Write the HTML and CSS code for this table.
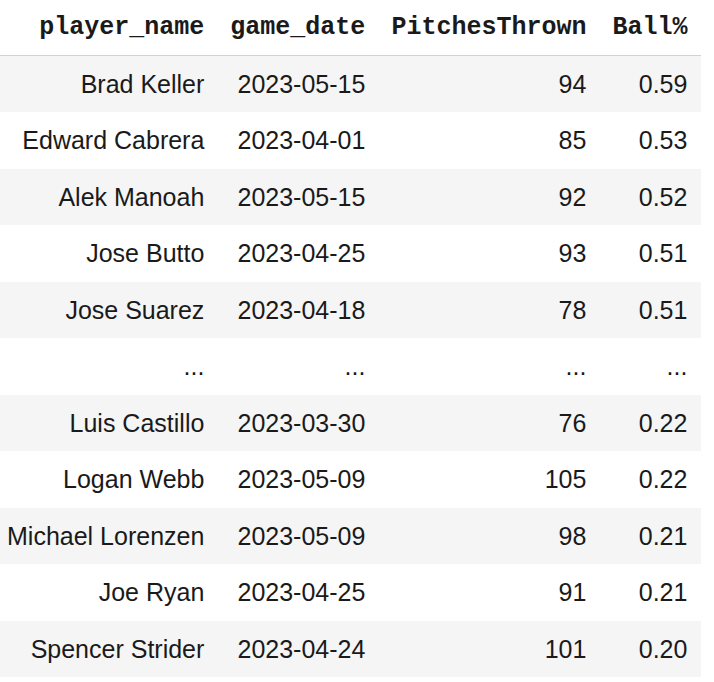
FILE: index.html
```html
<!DOCTYPE html>
<html>
<head>
<meta charset="utf-8">
<link rel="stylesheet" href="styles.css">
</head>
<body>
<table class="df">
  <thead>
    <tr>
      <th>player_name</th>
      <th>game_date</th>
      <th>PitchesThrown</th>
      <th>Ball%</th>
    </tr>
  </thead>
  <tbody>
    <tr><td>Brad Keller</td><td>2023-05-15</td><td>94</td><td>0.59</td></tr>
    <tr><td>Edward Cabrera</td><td>2023-04-01</td><td>85</td><td>0.53</td></tr>
    <tr><td>Alek Manoah</td><td>2023-05-15</td><td>92</td><td>0.52</td></tr>
    <tr><td>Jose Butto</td><td>2023-04-25</td><td>93</td><td>0.51</td></tr>
    <tr><td>Jose Suarez</td><td>2023-04-18</td><td>78</td><td>0.51</td></tr>
    <tr><td>...</td><td>...</td><td>...</td><td>...</td></tr>
    <tr><td>Luis Castillo</td><td>2023-03-30</td><td>76</td><td>0.22</td></tr>
    <tr><td>Logan Webb</td><td>2023-05-09</td><td>105</td><td>0.22</td></tr>
    <tr><td>Michael Lorenzen</td><td>2023-05-09</td><td>98</td><td>0.21</td></tr>
    <tr><td>Joe Ryan</td><td>2023-04-25</td><td>91</td><td>0.21</td></tr>
    <tr><td>Spencer Strider</td><td>2023-04-24</td><td>101</td><td>0.20</td></tr>
  </tbody>
</table>
</body>
</html>
```

FILE: styles.css
```css
html, body {
  margin: 0;
  padding: 0;
  background: #ffffff;
}

.df {
  border-collapse: collapse;
  border-spacing: 0;
  color: #1a1a1a;
  font-family: "Liberation Sans", Arial, sans-serif;
  font-size: 25px;
}

.df th {
  font-family: "Liberation Mono", "Courier New", monospace;
  font-weight: bold;
  text-align: right;
  height: 55px;
  padding: 0 13px;
  line-height: 55px;
  border-bottom: 1px solid #d2d2d2;
  white-space: nowrap;
  box-sizing: border-box;
}

.df th:first-child,
.df td:first-child {
  padding-left: 7px;
}

.df th:last-child,
.df td:last-child {
  padding-right: 14px;
}

.df td {
  text-align: right;
  padding: 0 13px;
  height: 56.45px;
  line-height: 56.45px;
  white-space: nowrap;
}

.df tbody tr:nth-child(odd) {
  background: #f5f5f5;
}
```
